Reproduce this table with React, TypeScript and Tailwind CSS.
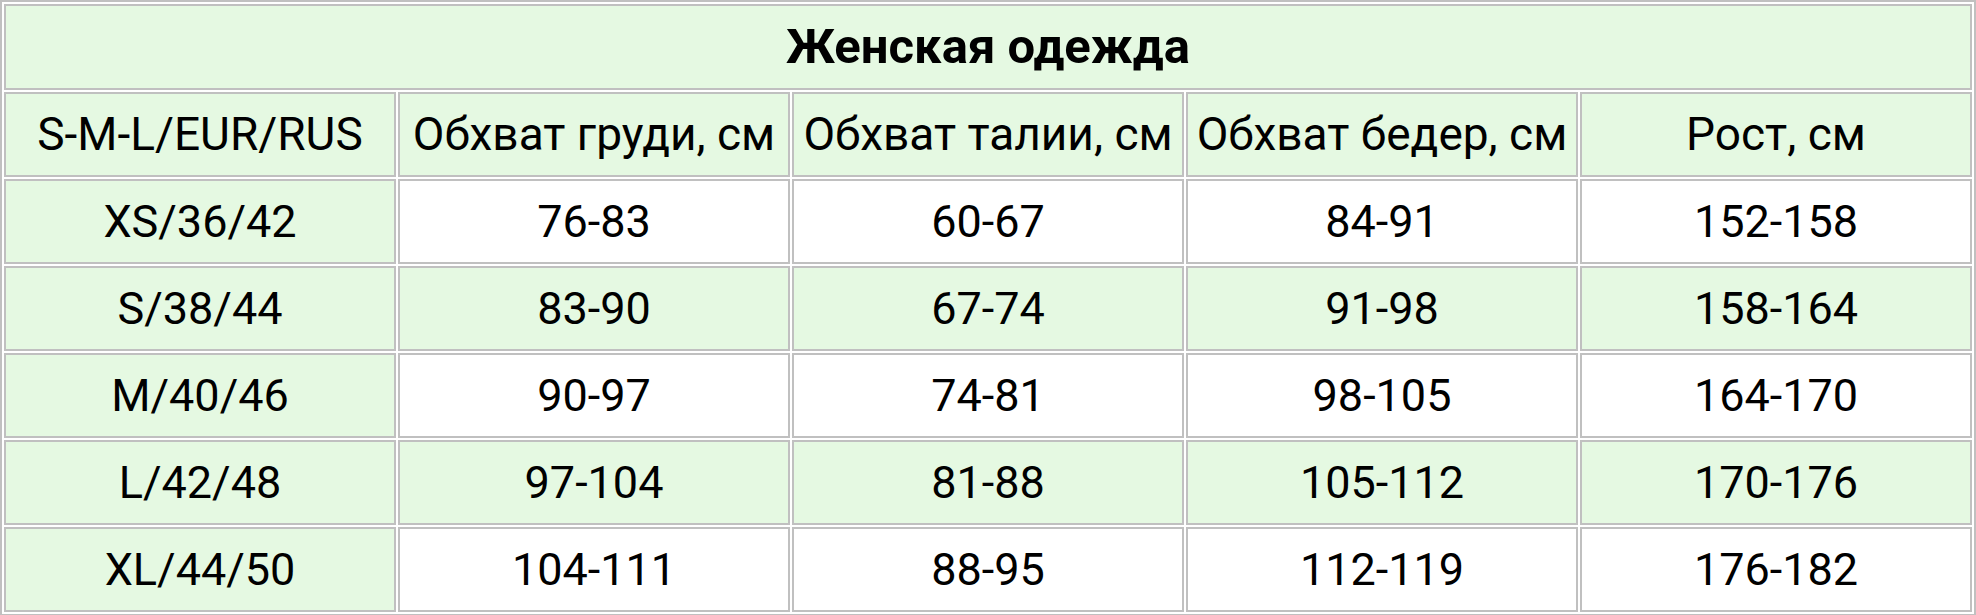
const rows = [
  ["XS/36/42", "76-83", "60-67", "84-91", "152-158"],
  ["S/38/44", "83-90", "67-74", "91-98", "158-164"],
  ["M/40/46", "90-97", "74-81", "98-105", "164-170"],
  ["L/42/48", "97-104", "81-88", "105-112", "170-176"],
  ["XL/44/50", "104-111", "88-95", "112-119", "176-182"],
];

const headers = ["S-M-L/EUR/RUS", "Обхват груди, см", "Обхват талии, см", "Обхват бедер, см", "Рост, см"];

const cell = "border-2 border-[#c0c0c0] text-center align-middle h-[85px] p-0";

export default function App() {
  return (
    <div className="w-[1976px] bg-white font-['Roboto',sans-serif] text-black">
      <table className="w-full table-fixed border-separate border-spacing-[2px] border-2 border-[#c0c0c0] bg-white">
        <tbody>
          <tr>
            <td colSpan={5} className={`${cell} h-[86px] bg-[#e5f9e2] text-[49px] font-bold`}>
              Женская одежда
            </td>
          </tr>
          <tr>
            {headers.map((h) => (
              <td key={h} className={`${cell} bg-[#e5f9e2] text-[46px]`}>
                {h}
              </td>
            ))}
          </tr>
          {rows.map((r, i) => (
            <tr key={r[0]}>
              {r.map((v, j) => (
                <td
                  key={j}
                  className={`${cell} text-[45px] ${j === 0 || i % 2 === 1 ? "bg-[#e5f9e2]" : "bg-white"}`}
                >
                  {v}
                </td>
              ))}
            </tr>
          ))}
        </tbody>
      </table>
    </div>
  );
}
